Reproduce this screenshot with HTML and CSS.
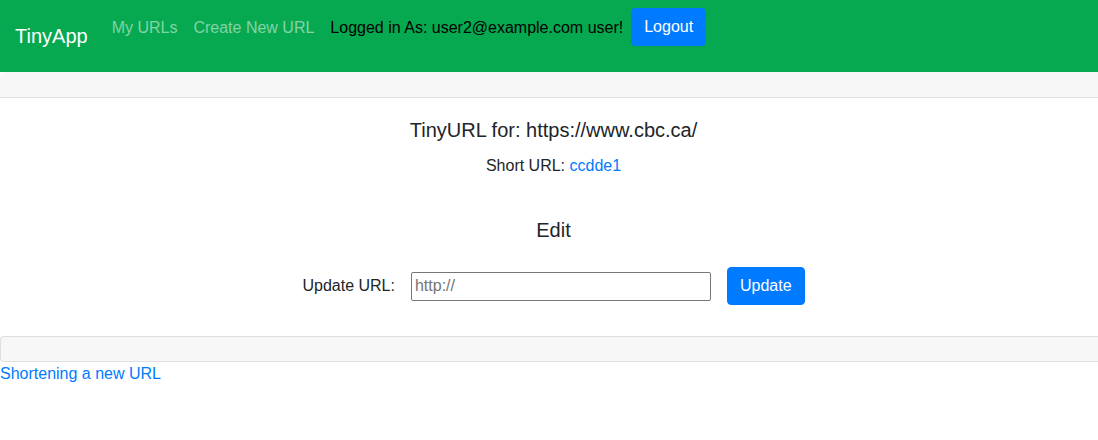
FILE: index.html
```html
<!DOCTYPE html>
<html lang="en">
<head>
<meta charset="utf-8">
<title>TinyApp</title>
<link rel="stylesheet" href="styles.css">
</head>
<body>
<nav class="navbar">
  <a class="brand" href="#">TinyApp</a>
  <div class="nav-main">
    <a class="nav-link" href="#">My URLs</a>
    <a class="nav-link" href="#">Create New URL</a>
    <span class="nav-text">Logged in As: user2@example.com user!</span>
    <form class="logout-form">
      <button type="button" class="btn btn-primary">Logout</button>
    </form>
  </div>
</nav>
<main class="page">
  <div class="card-header"></div>
  <div class="card-body">
    <h5 class="card-title">TinyURL for: https://www.cbc.ca/</h5>
    <p class="short">Short URL: <a href="#">ccdde1</a></p>
    <h5 class="edit-title">Edit</h5>
    <form class="update-form">
      <label class="update-label" for="url">Update URL:</label>
      <input id="url" class="update-input" type="text" placeholder="http://">
      <button type="button" class="btn btn-primary">Update</button>
    </form>
  </div>
  <div class="card-footer"></div>
</main>
<a class="new-link" href="#">Shortening a new URL</a>
</body>
</html>
```
FILE: styles.css
```css
* { box-sizing: border-box; }
html, body { margin: 0; padding: 0; }
body {
  font-family: "Liberation Sans", Arial, sans-serif;
  font-size: 16px;
  line-height: 24px;
  color: #212529;
  background: #fff;
}
a { color: #007bff; text-decoration: none; }

.navbar {
  background: #06a94f;
  padding: 8px 16px 8px 15px;
  display: flex;
  align-items: center;
  height: 72px;
}
.brand {
  color: #fff;
  font-size: 20px;
  line-height: 30px;
  padding: 5px 0;
  margin-right: 16px;
}
.nav-main {
  display: flex;
  align-items: flex-start;
  align-self: flex-start;
  height: 56px;
}
.nav-link {
  color: rgba(255, 255, 255, 0.5);
  padding: 8px 8px;
  display: block;
}
.nav-text {
  color: #000;
  padding: 8px 8px;
}
.logout-form { margin: 0; }
.btn {
  font-family: inherit;
  font-size: 16px;
  line-height: 24px;
  padding: 6px 12px;
  border: 1px solid transparent;
  border-radius: 4px;
  cursor: pointer;
}
.btn-primary {
  background: #007bff;
  border-color: #007bff;
  color: #fff;
}

.page { display: block; }
.card-header {
  background: #f7f7f7;
  border-bottom: 1px solid #dfdfdf;
  border-top-left-radius: 4px;
  height: 26px;
}
.card-footer {
  background: #f7f7f7;
  border: 1px solid #dfdfdf;
  border-right: none;
  border-radius: 4px 0 0 4px;
  height: 26px;
}
.card-body {
  padding: 20px 20px 20px 29px;
  text-align: center;
  height: 238px;
}
.card-title {
  font-size: 20px;
  font-weight: 500;
  line-height: 24px;
  margin: 0 0 12px;
}
.short { margin: 0; }
.edit-title {
  font-size: 20px;
  font-weight: 500;
  line-height: 24px;
  margin: 40px 0 0;
}
.update-form {
  display: flex;
  justify-content: center;
  align-items: center;
  gap: 16px;
  margin: 25px 0 0;
}
.update-label { line-height: 24px; }
.update-input {
  width: 300px;
  height: 29px;
  border: 1px solid #767676;
  border-radius: 2px;
  padding: 1px 3px;
  font-family: inherit;
  font-size: 16px;
  color: #212529;
}
.update-input::placeholder { color: #757575; }
.new-link { display: inline-block; }
```
